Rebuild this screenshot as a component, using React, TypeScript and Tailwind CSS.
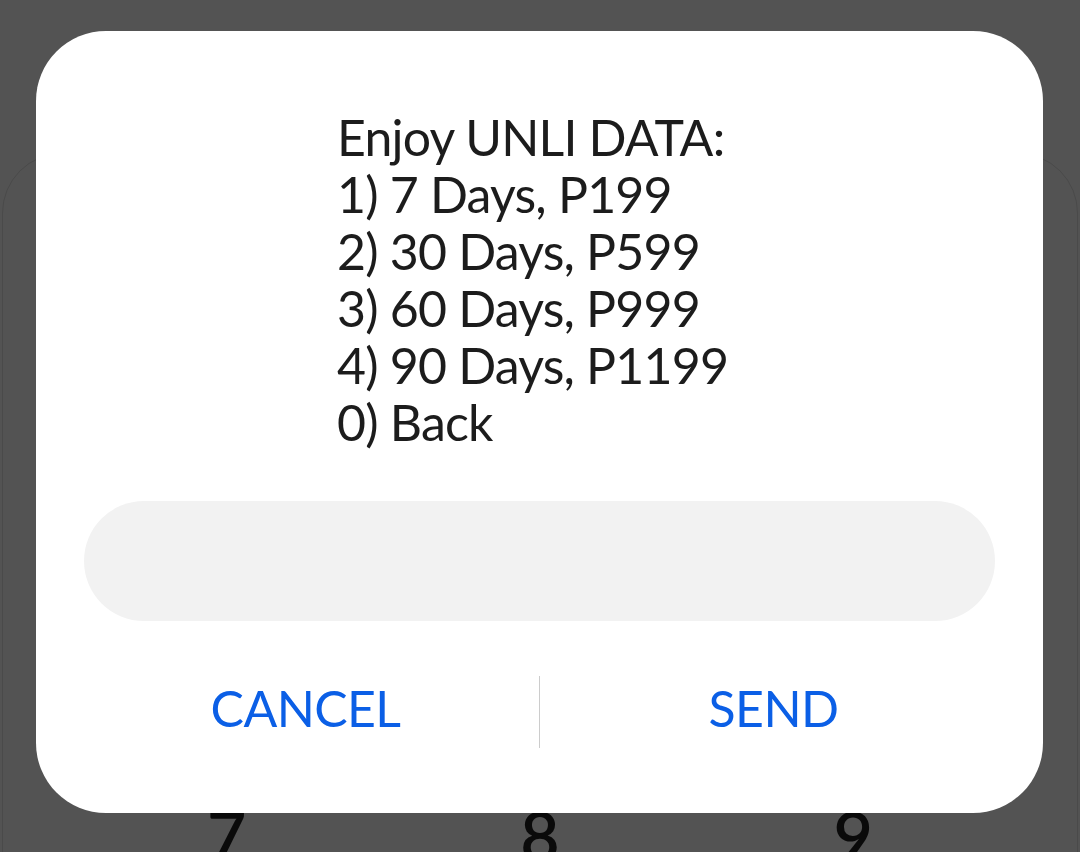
const lines = [
  "Enjoy UNLI DATA:",
  "1) 7 Days, P199",
  "2) 30 Days, P599",
  "3) 60 Days, P999",
  "4) 90 Days, P1199",
  "0) Back",
];

export default function App() {
  return (
    <div
      className="relative w-[1080px] h-[852px] overflow-hidden bg-[#535353]"
      style={{ fontFamily: "Lato, 'Noto Sans', sans-serif" }}
    >
      {/* dimmed page behind the dialog */}
      <div className="absolute left-[2px] right-[2px] top-[153px] h-[900px] rounded-[60px] border border-[#4a4a4a]" />
      <div className="absolute left-0 right-0 top-[801px] grid grid-cols-3 px-[70px] text-[68px] font-semibold leading-none text-[#0a0a0a]">
        <div className="text-center">7</div>
        <div className="text-center">8</div>
        <div className="text-center">9</div>
      </div>

      {/* USSD dialog */}
      <div className="absolute left-[36px] top-[31px] w-[1007px] h-[782px] rounded-[70px] bg-white">
        <div className="pt-[78px] pl-[301px] text-[50px] leading-[57px] tracking-[-0.8px] text-[#1c1c1c]">
          {lines.map((l) => (
            <div key={l}>{l}</div>
          ))}
        </div>

        <div className="mx-[48px] mt-[50px] h-[120px] rounded-full bg-[#f2f2f2]" />

        <div className="mt-[55px] flex h-[72px] items-center px-[36px] text-[50px] tracking-[-0.6px] text-[#0b5fe6]">
          <button className="flex-1 pb-[7px] text-center">CANCEL</button>
          <div className="h-full w-px bg-[#cccccc]" />
          <button className="flex-1 pb-[7px] text-center">SEND</button>
        </div>
      </div>
    </div>
  );
}
